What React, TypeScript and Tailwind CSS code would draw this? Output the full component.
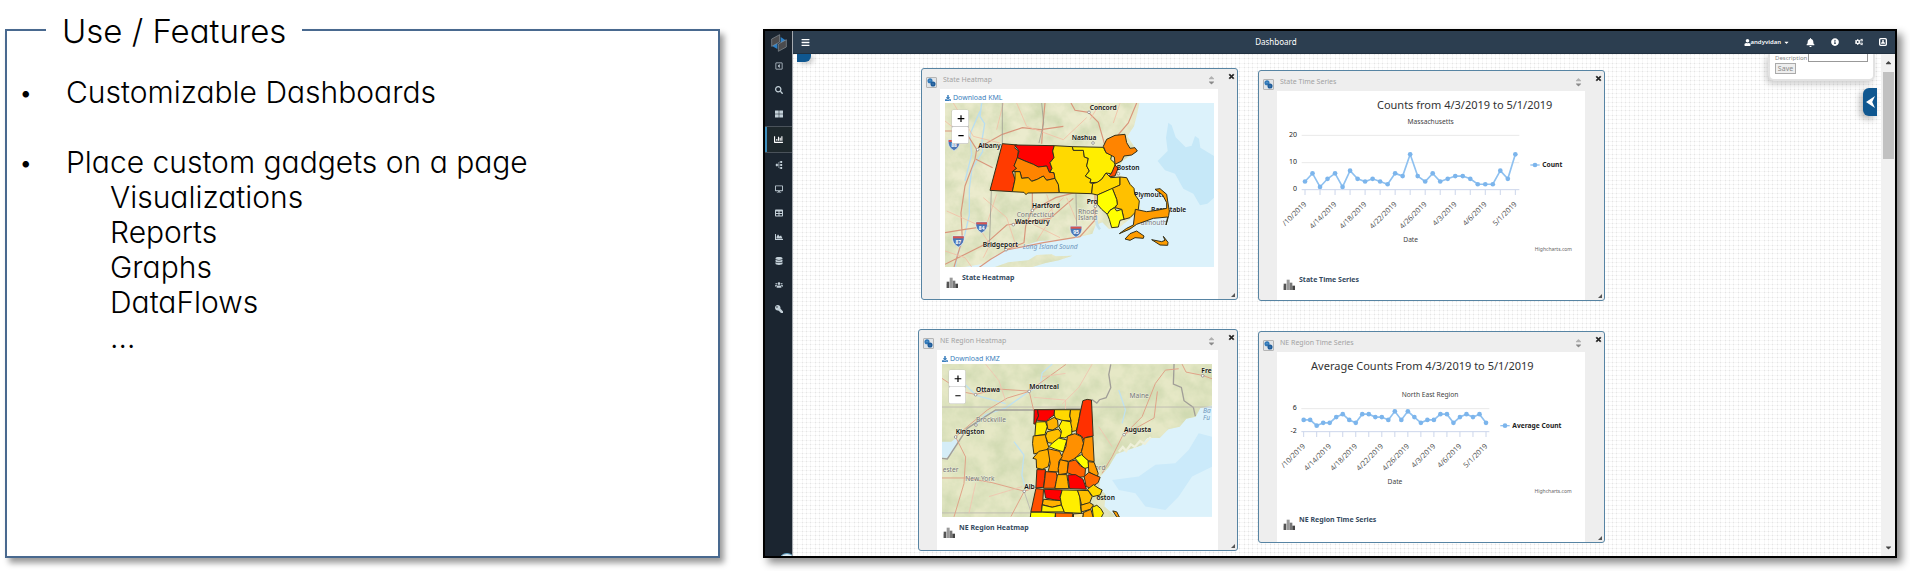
import type { ReactNode } from "react";
import {
  FaBars, FaBell, FaCaretDown, FaCaretUp, FaChartArea, FaChartBar, FaCogs, FaDatabase, FaDesktop, FaDownload,
  FaInfoCircle, FaKey, FaRegCaretSquareLeft, FaSearch, FaSitemap, FaTable, FaThLarge, FaTimes, FaUser, FaUsers,
} from "react-icons/fa";

type Region = { fill: string; pts: string };
type Place = { x: number; y: number; name: string; dot?: [number, number]; soft?: boolean };

const stateRegions: Region[] = [
  { fill: "#ff3b00", pts: "307,278 352,282 344,290 355,300 352,322 342,345 350,352 337,362 345,385 337,422 270,418" },
  { fill: "#ff0000", pts: "344,282 463,284 458,300 462,320 450,335 456,352 448,364 440,345 415,348 400,340 375,330 352,320 357,300" },
  { fill: "#ff8400", pts: "352,320 375,330 400,340 415,348 440,345 448,364 462,365 465,382 440,388 430,375 412,385 395,391 385,380 365,382 360,362 337,362 350,352 342,345" },
  { fill: "#ffb200", pts: "345,362 360,362 365,382 385,380 395,391 412,385 430,375 440,388 465,382 475,400 478,425 383,426 378,431 372,424 337,422 345,385" },
  { fill: "#ffd900", pts: "463,284 517,287 520,298 550,298 553,318 565,322 560,345 568,360 556,375 573,385 570,395 578,398 575,428 478,425 475,400 465,382 462,365 450,364 456,352 450,335 462,320 458,300" },
  { fill: "#ffee00", pts: "517,287 610,289 618,305 635,312 632,325 643,335 648,350 632,368 618,366 605,385 592,394 570,395 573,385 556,375 568,360 560,345 565,322 553,318 550,298 520,298" },
  { fill: "#ff8400", pts: "610,286 620,265 645,253 675,250 680,275 690,292 705,290 712,300 695,312 672,315 665,330 645,340 643,318 618,305" },
  { fill: "#ff4a00", pts: "645,342 654,352 645,375 622,378 634,368" },
  { fill: "#ffd900", pts: "578,398 592,394 605,385 618,366 632,380 660,378 660,402 640,412 592,432 575,428" },
  { fill: "#ffc000", pts: "660,378 680,380 690,400 702,412 704,430 718,450 715,475 700,490 690,500 672,505 665,475 645,470 652,460 650,445 637,412 660,402" },
  { fill: "#ffff00", pts: "592,432 637,412 650,445 652,460 643,470 630,478 622,490 605,475 592,460" },
  { fill: "#ffff00", pts: "622,490 630,478 643,470 650,480 665,475 672,505 660,508 655,528 635,530 628,505" },
  { fill: "#ff9c00", pts: "706,475 740,482 770,478 800,472 800,455 788,432 765,415 780,413 800,430 803,450 808,480 806,494 798,522 803,498 760,502 732,512 710,520 690,534 658,548 680,532 700,522" },
  { fill: "#ff9c00", pts: "675,564 690,548 710,540 732,555 730,562 705,560 690,568" },
  { fill: "#ff9c00", pts: "755,566 785,572 795,568 790,556 804,574 803,583 780,582" },
];

const neRegions: Region[] = [
  { fill: "#ff0000", pts: "406,299 416,299 419,318 413,330 411,342 405,342" },
  { fill: "#ff0000", pts: "416,299 467,299 466,315 450,326 443,334 420,332 413,330 419,318" },
  { fill: "#ffd900", pts: "467,299 515,299 513,318 517,333 490,331 470,325 466,315" },
  { fill: "#ffc000", pts: "515,299 545,299 541,325 537,345 532,362 517,365 512,350 517,333 513,318" },
  { fill: "#ff3000", pts: "552,272 565,268 578,270 583,378 562,382 558,394 548,378 532,370 537,345 541,325 546,300" },
  { fill: "#ffb200", pts: "443,334 466,322 476,330 478,350 462,360 447,358" },
  { fill: "#ffee00", pts: "411,336 440,335 445,350 438,374 408,377" },
  { fill: "#ffb200", pts: "403,378 440,374 444,395 450,412 440,422 420,428 405,432 401,400" },
  { fill: "#ffc000", pts: "445,365 478,357 490,372 480,388 462,400 447,398 440,378" },
  { fill: "#ffee00", pts: "490,331 515,335 519,355 519,372 498,384 484,382 488,364 480,350" },
  { fill: "#ffff00", pts: "450,410 462,398 480,384 504,390 498,410 494,426 470,418" },
  { fill: "#ff9000", pts: "506,378 528,371 548,380 554,400 548,425 530,445 510,454 484,450 492,430 501,410" },
  { fill: "#ff9000", pts: "556,384 582,379 586,455 568,452 552,440 548,425 554,402" },
  { fill: "#ffb200", pts: "402,445 420,424 447,418 455,440 448,470 430,478 413,474 412,448" },
  { fill: "#ff9c00", pts: "447,416 482,424 490,440 480,455 478,486 448,484 454,460" },
  { fill: "#ffff00", pts: "528,444 548,434 568,452 570,472 556,476 543,462" },
  { fill: "#ff9c00", pts: "484,449 508,455 505,490 480,494 478,475" },
  { fill: "#ff6000", pts: "510,455 530,450 545,468 560,476 558,500 540,502 505,488" },
  { fill: "#ff9c00", pts: "568,455 586,457 598,490 596,500 570,486" },
  { fill: "#ff3000", pts: "414,479 440,479 437,505 434,532 411,534" },
  { fill: "#ff6000", pts: "440,485 472,487 475,500 468,535 434,535 438,506" },
  { fill: "#ffb200", pts: "476,494 504,494 507,515 510,536 468,536 472,515" },
  { fill: "#ff0000", pts: "507,495 530,494 552,507 563,538 512,536" },
  { fill: "#ff6a00", pts: "556,500 570,487 604,502 598,518 575,534 562,530" },
  { fill: "#ff5000", pts: "411,536 434,538 432,570 427,606 396,606" },
  { fill: "#ff0000", pts: "436,538 490,540 484,560 486,572 468,570 440,564" },
  { fill: "#ffb200", pts: "434,568 468,571 486,572 488,585 460,592 430,584" },
  { fill: "#ffee00", pts: "430,585 460,592 488,585 497,606 428,606" },
  { fill: "#ffee00", pts: "490,540 536,541 543,560 545,590 548,610 497,608 488,585 484,562" },
  { fill: "#ffc000", pts: "536,541 568,542 580,560 572,580 548,585 543,562" },
  { fill: "#ffd900", pts: "566,538 584,524 598,534 610,540 604,555 582,560" },
  { fill: "#ffb200", pts: "546,586 572,578 584,585 575,598 548,606" },
  { fill: "#ffff00", pts: "396,607 432,607 470,609 468,625 394,625" },
  { fill: "#ff6a00", pts: "470,609 522,610 520,625 470,625" },
  { fill: "#ffe8a0", pts: "524,612 554,610 552,625 524,625" },
  { fill: "#ffa000", pts: "554,608 576,598 584,625 552,625" },
  { fill: "#ffee00", pts: "580,592 594,586 606,596 614,610 606,625 584,625" },
  { fill: "#ff9c00", pts: "642,603 654,606 662,622 654,622" },
];

const statePlaces: Place[] = [
  { x: 569, y: 176, name: "Concord", dot: [567, 184] },
  { x: 515, y: 268, name: "Nashua", dot: [579, 276] },
  { x: 235, y: 290, name: "Albany", dot: [233, 296] },
  { x: 396, y: 471, name: "Hartford", dot: [397, 478] },
  { x: 350, y: 498, name: "Connecticut", soft: true },
  { x: 345, y: 518, name: "Waterbury", dot: [340, 521] },
  { x: 248, y: 587, name: "Bridgeport", dot: [318, 596] },
  { x: 534, y: 488, name: "Rhode", soft: true },
  { x: 534, y: 508, name: "Island", soft: true },
];

const nePlaces: Place[] = [
  { x: 231, y: 246, name: "Ottawa", dot: [230, 254] },
  { x: 391, y: 236, name: "Montreal", dot: [391, 244] },
  { x: 692, y: 263, name: "Maine", soft: true },
  { x: 908, y: 189, name: "Fre", dot: [912, 197] },
  { x: 231, y: 337, name: "Brockville", dot: [231, 345], soft: true },
  { x: 170, y: 373, name: "Kingston", dot: [170, 381] },
  { x: 676, y: 365, name: "Augusta", dot: [676, 374] },
  { x: 131, y: 486, name: "ester", soft: true },
  { x: 199, y: 512, name: "New York", soft: true },
];

const stateUnderPlaces: Place[] = [
  { x: 560, y: 458, name: "Pro", dot: [586, 466] },
  { x: 703, y: 438, name: "Plymouth" },
  { x: 753, y: 484, name: "Barnstable" },
  { x: 722, y: 523, name: "almouth", soft: true },
];

const neUnderPlaces: Place[] = [
  { x: 376, y: 537, name: "Alb", dot: [376, 544] },
  { x: 588, y: 480, name: "ord", soft: true },
];

function Places({ items }: { items: Place[] }) {
  return (
    <g fontFamily="'Noto Sans', sans-serif" fontSize="20">
      {items.map((p) => (
        <g key={p.name}>
          {p.dot && <circle cx={p.dot[0]} cy={p.dot[1]} r="4" fill="#fff" stroke="#777" strokeWidth="2" />}
          <text
            x={p.x} y={p.y} fill={p.soft ? "#777" : "#111"} fontWeight={p.soft ? 400 : 600}
            stroke="#fff" strokeWidth="3" strokeOpacity="0.4" paintOrder="stroke"
          >
            {p.name}
          </text>
        </g>
      ))}
    </g>
  );
}

function Terrain({ id }: { id: string }) {
  return (
    <filter id={id} x="0" y="0" width="100%" height="100%">
      <feTurbulence type="fractalNoise" baseFrequency="0.018" numOctaves="4" seed="7" result="n" />
      <feColorMatrix in="n" type="matrix" values="0 0 0 0 0.60  0 0 0 0 0.68  0 0 0 0 0.42  1.6 0 0 0 -0.5" result="c" />
      <feComposite in="c" in2="SourceGraphic" operator="in" result="t" />
      <feMerge><feMergeNode in="SourceGraphic" /><feMergeNode in="t" /></feMerge>
    </filter>
  );
}

function Shield({ x, y, n }: { x: number; y: number; n: string }) {
  return (
    <g>
      <path d={`M${x - 17} ${y - 15}h34q4 22 -17 33q-21 -11 -17 -33z`} fill="#4b76b5" stroke="#e9eef5" strokeWidth="2" />
      <path d={`M${x - 16} ${y - 14}h32v6h-32z`} fill="#d9534f" />
      <text x={x} y={y + 8} textAnchor="middle" fontFamily="'Noto Sans', sans-serif" fontWeight="700" fontSize="15" fill="#fff">{n}</text>
    </g>
  );
}

function ZoomControl({ x, y }: { x: number; y: number }) {
  return (
    <g>
      <rect x={x - 1} y={y - 1} width="51" height="102" rx="5" fill="#bbb" />
      <rect x={x} y={y} width="49" height="49" rx="4" fill="#fff" />
      <rect x={x} y={y + 51} width="49" height="49" rx="4" fill="#fff" />
      <path d={`M${x + 17} ${y + 26}h20M${x + 27} ${y + 16}v20M${x + 19} ${y + 77}h16`} stroke="#000" strokeWidth="3.5" />
    </g>
  );
}

function Regions({ items }: { items: Region[] }) {
  return (
    <g stroke="#33301a" strokeWidth="3" strokeLinejoin="round">
      {items.map((r) => <polygon key={r.pts} points={r.pts} fill={r.fill} />)}
    </g>
  );
}

function StateMap() {
  return (
    <svg viewBox="135 156 807 492" className="block h-[164px] w-[269px]" role="img" aria-label="State heatmap">
      <defs><Terrain id="terrainState" /></defs>
      <rect x="135" y="156" width="807" height="492" fill="#dcf2fb" />
      <path d="M805 215l10 8 12 36 30 30 18-5 10-29 12 8 4 27 41 25v125l-20 18-22 5-20-35-30-15-25-45-30-10-22-28 30-30-5-40z" fill="#c6e8f8" />
      <g filter="url(#terrainState)">
        <path d="M135 156H718l-6 30-10 40-20 30 30 44-45 30-15 40 30 10 35 60 5 40-40 30-25 20-30 4-20-20-20 8-10 26-40 10-50 8-70 4-60 18-45 12-30 16-30 22-60 10H135z" fill="#ebebcd" />
        <path d="M285 648l40-14 60-6 25-16 45-2 12 6 50-2-40 14-40 8-40 12z" fill="#ebebcd" />
      </g>
      <path d="M245 156l-5 40 14 22-8 50 2 34-32 50-8 60 0 80-14 60-22 60-6 36M240 180l-30 70 5 60-20 80" fill="none" stroke="#b9def0" strokeWidth="4" />
      <path d="M135 240h60l35 55-5 30-30 80-12 80 4 80-25 83M228 325l50 25M235 290l72-40 60-20 55 6 68-10M425 278l4-60 6-62M513 156l12 22 40 6 30 30 20 70M710 156l-25 60-60 70M397 425v50l-20 50-5 50-50 20-50 30-40 28M397 478l70-38 60-16 50 4M135 640l120-60 65-58 130-20 70-60M135 545l60-10 70-10M320 597l110-22 110-18 45-50v-80" fill="none" stroke="#d9967c" strokeWidth="3.5" />
      <path d="M135 210l50 40M160 156l60 100 80 20M310 156l-20 80M350 156l30 70 110 40M250 440l70 60 30 90M440 430l20 60-50 80M490 440l-60 60M140 480l90 40 40 60-20 40M290 430l-30 90M560 200l-70 66M600 156l-30 50M135 600l60 20 20 28M500 440l30 70M400 520l80 40M660 156l-20 60" fill="none" stroke="#f3bfa6" strokeWidth="2.5" />
      <path d="M307 156v124M425 156l6 60-14 60M274 420l-6 170M528 428l2 110" fill="none" stroke="#9c9c92" strokeWidth="3" opacity="0.8" />
      <path d="M600 535q-14-14-10-40" fill="none" stroke="#c6e2ea" strokeWidth="8" />
      <text x="368" y="594" fontFamily="'Noto Sans', sans-serif" fontStyle="italic" fontSize="20" fill="#6f97bd">Long Island Sound</text>
      <Shield x={162} y={281} n="88" />
      <Shield x={245} y={528} n="84" />
      <Shield x={175} y={570} n="87" />
      <Shield x={528} y={541} n="95" />
      <Places items={stateUnderPlaces} />
      <Regions items={stateRegions} />
      <Places items={statePlaces} />
      <circle cx="655" cy="368" r="4" fill="#fff" stroke="#777" strokeWidth="2" />
      <text x="650" y="358" fontFamily="'Noto Sans', sans-serif" fontSize="20" fontWeight="600" fill="#111">Boston</text>
      <ZoomControl x={156} y={177} />
    </svg>
  );
}

function RegionMap() {
  return (
    <svg viewBox="129 162 811 459" className="block h-[153px] w-[270px]" role="img" aria-label="NE Region heatmap">
      <defs><Terrain id="terrainNe" /></defs>
      <rect x="129" y="162" width="811" height="459" fill="#dcf2fb" />
      <path d="M720 500l50-36 60-4 40-40 30-50 40 10v90l-60 30-40 60-40 40-60-10-30-40-50-10-20-30z" fill="#cbeafa" />
      <g filter="url(#terrainNe)">
        <path d="M129 162H940v124l-35 8-14 26-28 6-20 24-34 8-26 26-38 0-16 22-36 12-40 14-24 40-24 28-4 34 20 20-4 36 30 26 10 25H129z" fill="#e6e8c6" />
      </g>
      <path d="M129 395l28 0 14-10 8 6-16 34-18 18H129z" fill="#d5edf7" />
      <path d="M460 162l-30 26-6 40-34 16-70 50-60 20-30 30M345 395l30 40-6 60 10 40M200 225l30 30 90 26M660 240l20 60-10 40" fill="none" stroke="#c0e1ee" strokeWidth="4" />
      <path d="M129 445l16 2 60-92 85-55h116l20-1 122-3 10-25 12 4 10-6 14 10 8-10 20-6 14-30-6-40 6-30M826 162l-2 60 24 10 8 40 28 20 6 26" fill="none" stroke="#a19e98" strokeWidth="4" />
      <path d="M129 291h811M129 609h270M376 545l20 60" stroke="#b9b6b0" strokeWidth="2.5" fill="none" />
      <path d="M129 205l60 40 40 8 70-16 92 6 60-44 50-36M391 244l14 60M391 244l-66 20-60 36-60 50-35 30M170 381l30 60-5 80-30 100M129 504l70 0 80 14 98 26M376 544l-40 76M376 544l60-20M640 440l30-60 60-60 40-100 30-40 40-4M640 440l-30 50M676 374l90-50 10-80M850 162l12 24 50 10 28 10" fill="none" stroke="#e0a389" strokeWidth="3" />
      <path d="M260 162l40 50 20 60M430 200l70-10M405 262l95 8v28M580 162l-40 70-50 50M600 350l40 60M270 560l100-30M230 520l-20 90" fill="none" stroke="#f0c3ae" strokeWidth="2.5" />
      <path d="M660 425l12-14 10 12 14-20 12 8 16-18 14 8 18-20" fill="none" stroke="#eef0da" strokeWidth="7" />
      <Places items={neUnderPlaces} />
      <Regions items={neRegions} />
      <Places items={nePlaces} />
      <text x="593" y="570" fontFamily="'Noto Sans', sans-serif" fontSize="20" fontWeight="600" fill="#111">oston</text>
      <g fontFamily="'Noto Sans', sans-serif" fontStyle="italic" fontSize="20" fill="#6f97bd">
        <text x="913" y="310">Ba</text>
        <text x="913" y="331">Fu</text>
      </g>
      <ZoomControl x={150} y={180} />
    </svg>
  );
}

type ChartProps = {
  label: string; title: string; titleX: number; subtitle: string; subX: number; subY: number; legend: string;
  legendX: number; legendY: number; x0: number; x1: number; gridX0: number; gridX1: number; axisY: number;
  zeroY: number; unit: number; gridLines: { y: number; text: string }[]; data: number[]; dateX: number;
  creditX: number; creditY: number;
};

const tickLabels = ["/10/2019", "4/14/2019", "4/18/2019", "4/22/2019", "4/26/2019", "4/3/2019", "4/6/2019", "5/1/2019"];

function LineChart(p: ChartProps) {
  const step = (p.x1 - p.x0) / (p.data.length - 1);
  const pts = p.data.map((v, i) => [p.x0 + i * step, p.zeroY - v * p.unit]);
  return (
    <svg viewBox="117 120 918 510" className="block h-[170px] w-[306px]" role="img" aria-label={p.label} fontFamily="'Noto Sans', sans-serif">
      <text x={p.titleX} y="175" fontSize="33" textAnchor="middle" fill="#333">{p.title}</text>
      <text x={p.subX} y={p.subY} fontSize="20" textAnchor="middle" fill="#444">{p.subtitle}</text>
      {p.gridLines.map((g) => (
        <g key={g.text}>
          <path d={`M${p.gridX0} ${g.y}H${p.gridX1}`} stroke={g.y === p.axisY ? "#ccd6eb" : "#e9e9e9"} strokeWidth="3" />
          <text x={p.gridX0 - 14} y={g.y + 5} fontSize="21" textAnchor="end" fill="#222">{g.text}</text>
        </g>
      ))}
      {pts.filter((_, i) => i % 2 === 0).map(([x]) => (
        <path key={x} d={`M${x} ${p.axisY}v16`} stroke="#ccd6eb" strokeWidth="3" />
      ))}
      <polyline points={pts.map((q) => q.join(",")).join(" ")} fill="none" stroke="#8fc1f0" strokeWidth="5" />
      {pts.map(([x, y]) => <circle key={x} cx={x} cy={y} r="7" fill="#7cb5ec" />)}
      {tickLabels.map((t, i) => {
        const x = p.x0 + i * 4 * step + 6;
        const y = p.axisY + 45;
        return <text key={t} x={x} y={y} transform={`rotate(-45 ${x} ${y})`} fontSize="22" textAnchor="end" fill="#555">{t}</text>;
      })}
      <text x={p.dateX} y={p.axisY + 156} fontSize="20" textAnchor="middle" fill="#444">Date</text>
      <path d={`M${p.legendX} ${p.legendY}h28`} stroke="#8fc1f0" strokeWidth="4" />
      <circle cx={p.legendX + 14} cy={p.legendY} r="7" fill="#7cb5ec" />
      <text x={p.legendX + 36} y={p.legendY + 7} fontSize="20" fontWeight="700" fill="#222">{p.legend}</text>
      <text x={p.creditX} y={p.creditY} fontSize="15" textAnchor="end" fill="#666">Highcharts.com</text>
    </svg>
  );
}

function BarsGlyph() {
  return (
    <svg viewBox="0 0 36 33" className="h-[11px] w-[12px] shrink-0" aria-hidden="true">
      <path d="M2 14h8v19H2z" fill="#555" />
      <path d="M11 2h9v31h-9z" fill="#999" />
      <path d="M20 11h8v22h-8z" fill="#777" />
      <path d="M28 20h8v13h-8z" fill="#444" />
      <path d="M0 20h2v13H0z" fill="#aaa" />
    </svg>
  );
}

function Gadget({ title, className, children }: { title: string; className: string; children: ReactNode }) {
  return (
    <article className={`${className} grid grid-cols-[18px_1fr_19px] rounded-[3px] border border-[#5784a3] bg-[#eeeeee]`}>
      <div className="flex flex-col items-center pt-2">
        <button aria-label="Configure" className="flex size-[11px] items-center justify-center rounded-[1px] border border-[#b5b5b5] bg-[#e0e4e8]">
          <svg viewBox="0 0 30 30" className="size-[9px]" aria-hidden="true">
            <circle cx="10" cy="9" r="5" fill="#cfe0ef" stroke="#3078b8" strokeWidth="7" />
            <circle cx="20" cy="20" r="5" fill="#cfe0ef" stroke="#1e5c9a" strokeWidth="7" />
          </svg>
        </button>
      </div>
      <div className="flex min-w-0 flex-col">
        <header className="flex h-5 shrink-0 items-center justify-between pt-0.5 pr-0.5 pl-[3px]">
          <h3 className="text-[7px] leading-3 whitespace-nowrap text-[#a2a2a2]">{title}</h3>
          <span className="flex flex-col text-[9px] text-[#8a8a8a]">
            <FaCaretUp className="-mb-1 opacity-60" />
            <FaCaretDown />
          </span>
        </header>
        <div className="flex grow flex-col bg-white">
          {children}
          <footer className="flex gap-1 pt-1.5 pl-1.5">
            <span className="pt-1"><BarsGlyph /></span>
            <strong className="text-[7px] leading-[10px] font-bold text-[#34495e]">{title}</strong>
          </footer>
        </div>
      </div>
      <div className="flex flex-col items-end justify-between pt-1 pr-0.5 pb-0.5">
        <button aria-label={`Close ${title}`} className="text-[7px] text-[#222]"><FaTimes strokeWidth="40" stroke="#222" /></button>
        <svg viewBox="0 0 4 4" className="size-1" aria-hidden="true"><path d="M4 0v4H0z" fill="#555" /></svg>
      </div>
    </article>
  );
}

function Download({ kind }: { kind: string }) {
  return (
    <a href="#download" className="flex items-center gap-0.5 pt-1 text-[7px] leading-[10px] text-[#3b7fbd]">
      <FaDownload className="text-[6px]" />
      Download {kind}
    </a>
  );
}

const navItems = [
  { name: "Collapse", icon: <FaRegCaretSquareLeft /> },
  { name: "Search", icon: <FaSearch /> },
  { name: "Tiles", icon: <FaThLarge /> },
  { name: "Dashboard", icon: <FaChartBar /> },
  { name: "Flows", icon: <FaSitemap className="-rotate-90" /> },
  { name: "Displays", icon: <FaDesktop /> },
  { name: "Tables", icon: <FaTable /> },
  { name: "Charts", icon: <FaChartArea /> },
  { name: "Data", icon: <FaDatabase /> },
  { name: "Users", icon: <FaUsers /> },
  { name: "Keys", icon: <FaKey className="-scale-x-100" /> },
];

function Sidebar() {
  return (
    <nav aria-label="Main" className="relative flex w-[28px] shrink-0 flex-col overflow-hidden border-r border-[#a5aab0] bg-[#1b2530]">
      <a href="#home" aria-label="Home" className="flex h-[23px] items-center justify-center">
        <svg viewBox="0 0 48 54" className="h-[18px] w-[16px]" aria-hidden="true">
          <path d="M29 9l17 11-17 10zM19 45L2 35l17-9z" fill="#2d80c6" />
          <path d="M2 15L26 2v22L2 37z" fill="#4b4b4d" stroke="#8b949b" strokeWidth="2" />
          <path d="M22 30l24-13v22L22 52z" fill="#4b4b4d" stroke="#8b949b" strokeWidth="2" />
        </svg>
      </a>
      {navItems.map((n) => (
        <a
          key={n.name}
          href="#nav"
          aria-label={n.name}
          className={
            n.name === "Dashboard"
              ? "flex h-[27px] items-center justify-center border-y border-[#4a525a] bg-[#1e282c] text-[9px] text-white shadow-[inset_2px_0_0_#3c8dbc]"
              : "flex h-6 items-center justify-center text-[8px] text-[#c3d0d8]"
          }
        >
          {n.icon}
        </a>
      ))}
      <span className="absolute -right-1 -bottom-[15px] size-[18px] rounded-full border border-[#5b9cc0] bg-[#dcebf2]" />
    </nav>
  );
}

function TopBar() {
  return (
    <header className="grid h-[23px] shrink-0 grid-cols-[100fr_auto_130fr] items-center border-b border-[#203040] bg-[#2c3e50] px-2 text-white">
      <button aria-label="Toggle menu" className="justify-self-start text-[9px]"><FaBars /></button>
      <h1 className="text-[8px] leading-3">Dashboard</h1>
      <div className="flex items-center gap-4 justify-self-end text-[9px]">
        <button className="flex items-center text-[6px] font-semibold">
          <FaUser className="text-[7px]" />
          andyvidan
          <FaCaretDown className="ml-0.5 text-[7px]" />
        </button>
        <button aria-label="Notifications"><FaBell /></button>
        <button aria-label="Information"><FaInfoCircle className="text-[8px]" /></button>
        <button aria-label="Settings"><FaCogs className="text-[8px]" /></button>
        <button aria-label="Profile">
          <svg viewBox="0 0 24 24" className="size-2" aria-hidden="true">
            <rect x="2" y="2" width="20" height="20" rx="3" fill="none" stroke="#fff" strokeWidth="4" />
            <path d="M6 17c0-4 3-5 6-5s6 1 6 5z" fill="#fff" />
            <circle cx="12" cy="9" r="3" fill="#fff" />
          </svg>
        </button>
      </div>
    </header>
  );
}

function DotGrid() {
  return (
    <svg className="absolute inset-0 size-full" aria-hidden="true">
      <defs>
        <pattern id="dots" width="13" height="13" patternUnits="userSpaceOnUse">
          <path d="M0 0h13v1H0zM0 4h13v1H0zM0 9h13v1H0zM0 0h1v13H0zM4 0h1v13H4zM9 0h1v13H9z" fill="#f7f7f7" />
          <path d="M0 0h1v1H0zM4 0h1v1H4zM9 0h1v1H9zM0 4h1v1H0zM4 4h1v1H4zM9 4h1v1H9zM0 9h1v1H0zM4 9h1v1H4zM9 9h1v1H9z" fill="#e4e4e4" />
        </pattern>
      </defs>
      <rect width="100%" height="100%" fill="#fff" />
      <rect width="100%" height="100%" fill="url(#dots)" />
    </svg>
  );
}

function Canvas() {
  return (
    <main className="relative min-w-0 grow overflow-hidden">
      <DotGrid />
      <span className="absolute top-0 left-1 h-2 w-[14px] rounded-br-md bg-[#0f5790] shadow-[3px_2px_5px_#0003]" />
      <form className="absolute top-0 right-[6px] rounded-b-md border-2 border-t-0 border-[#e2e2e2] bg-white px-[5px] pb-[5px] text-[7px] text-[#888] shadow-[-2px_3px_6px_#0003]">
        <div className="flex items-start">
          <label htmlFor="description" className="w-[33px] text-[6px] leading-[8px] whitespace-nowrap">Description</label>
          <input id="description" className="h-2 w-[60px] border border-t-0 border-[#999] bg-white px-0.5" />
        </div>
        <button type="button" className="mt-px block h-[11px] w-[21px] border border-[#aaa] bg-[#eee] text-[7px] leading-[9px]">Save</button>
      </form>
      <button aria-label="Open panel" className="absolute top-[34px] right-1 flex h-7 w-[14px] items-center justify-center rounded-l-md bg-[#0f5790] shadow-[-3px_3px_6px_#0004]">
        <svg viewBox="0 0 26 34" className="h-[12px] w-[9px]" aria-hidden="true"><path d="M0 17L26 0l-8 17 8 17z" fill="#fff" /></svg>
      </button>
      <div className="relative flex w-fit gap-5 pt-[14px] pl-[125px]">
        <div className="flex flex-col items-end gap-[29px]">
          <Gadget title="State Heatmap" className="h-[232px] w-[317px]">
            <div className="pl-[5px]"><Download kind="KML" /><StateMap /></div>
          </Gadget>
          <Gadget title="NE Region Heatmap" className="h-[222px] w-[320px]">
            <div className="pl-[5px]"><Download kind="KMZ" /><RegionMap /></div>
          </Gadget>
        </div>
        <div className="flex flex-col gap-[30px] pt-0.5">
          <Gadget title="State Time Series" className="h-[231px] w-[347px]">
            <div className="h-[178px] overflow-hidden">
              <LineChart
                label="State time series" title="Counts from 4/3/2019 to 5/1/2019" titleX={680} subtitle="Massachusetts" subX={578} subY={219}
                legend="Count" legendX={877} legendY={342} x0={201} x1={832} gridX0={191} gridX1={844} axisY={416} zeroY={416} unit={8.15}
                gridLines={[{ y: 253, text: "20" }, { y: 335, text: "10" }, { y: 416, text: "0" }]}
                data={[3, 6, 1, 4, 6, 1, 7, 4, 3, 4, 3, 2, 6, 5, 13, 5, 3, 6, 3, 4, 5, 5, 4, 2, 2, 2, 7, 4, 13]}
                dateX={518} creditX={1002} creditY={601}
              />
            </div>
          </Gadget>
          <Gadget title="NE Region Time Series" className="h-[212px] w-[347px]">
            <div className="h-[157px] overflow-hidden">
              <LineChart
                label="NE Region time series" title="Average Counts From 4/3/2019 to 5/1/2019" titleX={553} subtitle="North East Region" subX={576} subY={255}
                legend="Average Count" legendX={787} legendY={341} x0={197} x1={744} gridX0={190} gridX1={754} axisY={359} zeroY={341} unit={8.6}
                gridLines={[{ y: 290, text: "6" }, { y: 359, text: "-2" }]}
                data={[2, 2, 0, 1, 1, 3, 4, 2, 1, 4, 4, 3, 3, 2, 5, 2, 5, 3, 1, 2, 2, 4, 4, 1, 3, 4, 3, 4, 1]}
                dateX={471} creditX={1001} creditY={544}
              />
            </div>
          </Gadget>
        </div>
      </div>
    </main>
  );
}

function Scrollbar() {
  return (
    <div className="flex w-[14px] shrink-0 flex-col items-center bg-[#f1f1f1] py-1 text-[9px] text-[#444]" aria-hidden="true">
      <FaCaretUp />
      <span className="mt-[5px] h-[87px] w-[11px] bg-[#c1c1c1]" />
      <FaCaretDown className="mt-auto" />
    </div>
  );
}

export default function App() {
  return (
    <div className="grid min-h-screen grid-cols-[715fr_1134fr] gap-[43px] bg-white pt-[29px] pr-[13px] pb-[13px] pl-[5px] font-['Noto_Sans',sans-serif]">
      <section className="flex flex-col items-start border-2 border-[#49698f] bg-white font-['Inter',sans-serif] font-light text-black shadow-[4px_5px_6px_#0006] [font-feature-settings:'cv11']">
        <h2 className="-mt-5 ml-[39px] bg-white px-4 text-[33px] leading-10">Use / Features</h2>
        <ul className="mt-6 text-[30px] leading-[35px]">
          <li className="mb-[35px] flex">
            <span className="w-[59px] pl-3 text-[24px]">•</span>
            <p>Customizable Dashboards</p>
          </li>
          <li className="flex">
            <span className="w-[59px] pl-3 text-[24px]">•</span>
            <div>
              <p>Place custom gadgets on a page</p>
              <ul className="pl-11">
                <li>Visualizations</li>
                <li>Reports</li>
                <li>Graphs</li>
                <li>DataFlows</li>
                <li>…</li>
              </ul>
            </div>
          </li>
        </ul>
      </section>
      <section aria-label="Dashboard" className="flex min-w-0 overflow-hidden border-2 border-black shadow-[5px_5px_8px_#0007]">
        <Sidebar />
        <div className="flex min-w-0 grow flex-col">
          <TopBar />
          <div className="flex min-h-0 grow">
            <Canvas />
            <Scrollbar />
          </div>
        </div>
      </section>
    </div>
  );
}
